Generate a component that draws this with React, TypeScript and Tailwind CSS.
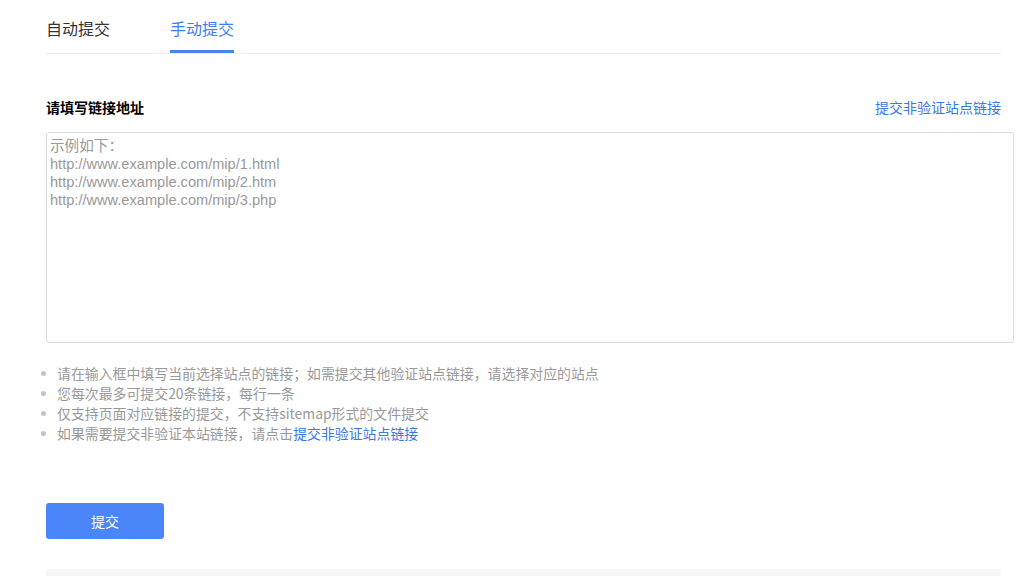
import React from "react";

const placeholder = [
  "示例如下：",
  "http://www.example.com/mip/1.html",
  "http://www.example.com/mip/2.htm",
  "http://www.example.com/mip/3.php",
].join("\n");

const tips: React.ReactNode[] = [
  "请在输入框中填写当前选择站点的链接；如需提交其他验证站点链接，请选择对应的站点",
  "您每次最多可提交20条链接，每行一条",
  "仅支持页面对应链接的提交，不支持sitemap形式的文件提交",
  <>
    如果需要提交非验证本站链接，请点击
    <a className="text-[#3b78e7] cursor-pointer">提交非验证站点链接</a>
  </>,
];

export default function App() {
  return (
    <div className="w-[1029px] h-[576px] overflow-hidden bg-white font-['Noto_Sans_CJK_SC','Liberation_Sans',sans-serif]">
      <div className="pl-[46px]">
        <div className="w-[955px] h-[54px] border-b border-[#eeeeee] flex gap-[60px]">
          <div className="h-full pt-[16px] text-[16px] leading-[24px] text-[#333333] cursor-pointer">
            自动提交
          </div>
          <div className="relative h-full pt-[16px] text-[16px] leading-[24px] text-[#3f7ef0] cursor-pointer">
            手动提交
            <div className="absolute left-0 right-0 bottom-0 h-[3px] bg-[#4a84ee]" />
          </div>
        </div>

        <div className="w-[955px] mt-[43px] flex justify-between items-center h-[20px]">
          <div className="text-[14px] leading-[20px] font-bold text-black">请填写链接地址</div>
          <a className="text-[14px] leading-[20px] text-[#3b78e7] cursor-pointer">提交非验证站点链接</a>
        </div>

        <textarea
          className="block mt-[15px] w-[968px] h-[211px] border border-[#dddddd] rounded-[3px] pt-[4px] px-[3px] text-[14.6px] leading-[18px] text-[#333] placeholder:text-[#999999] resize-none outline-none font-['Liberation_Sans','Noto_Sans_CJK_SC',sans-serif]"
          placeholder={placeholder}
        />

        <ul className="mt-[20px]">
          {tips.map((t, i) => (
            <li key={i} className="flex items-center h-[20px] text-[13.9px] leading-[20px] text-[#999999]">
              <span className="w-[5px] h-[5px] rounded-full bg-[#c4c4c4] ml-[-5px] mr-[11px] shrink-0" />
              <span>{t}</span>
            </li>
          ))}
        </ul>

        <button className="mt-[60px] w-[118px] h-[36px] rounded-[3px] bg-[#4a86fa] text-white text-[14px] leading-[36px] flex items-center justify-center">
          提交
        </button>

        <div className="mt-[30px] w-[955px] h-[10px] bg-[#f7f7f7]" />
      </div>
    </div>
  );
}
